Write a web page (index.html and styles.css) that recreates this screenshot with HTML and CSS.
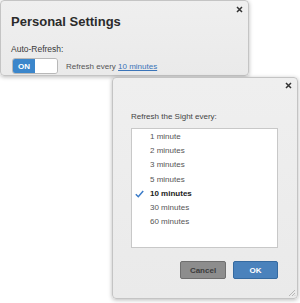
FILE: index.html
```html
<!DOCTYPE html>
<html>
<head>
<meta charset="utf-8">
<link rel="stylesheet" href="styles.css">
</head>
<body>
<div class="desk">
  <div class="dlg dlg-settings">
    <svg class="close" width="7" height="7" viewBox="0 0 7 7"><path d="M1 1 L6 6 M6 1 L1 6" stroke="#333" stroke-width="1.5"/></svg>
    <h1 class="title">Personal Settings</h1>
    <div class="label">Auto-Refresh:</div>
    <div class="row">
      <div class="toggle"><span class="on">ON</span><span class="off"></span></div>
      <span class="refresh">Refresh every <a class="link" href="#">10 minutes</a></span>
    </div>
  </div>

  <div class="dlg dlg-picker">
    <svg class="close" width="7" height="7" viewBox="0 0 7 7"><path d="M1 1 L6 6 M6 1 L1 6" stroke="#333" stroke-width="1.5"/></svg>
    <div class="prompt">Refresh the Sight every:</div>
    <ul class="list">
      <li class="item">1 minute</li>
      <li class="item">2 minutes</li>
      <li class="item">3 minutes</li>
      <li class="item">5 minutes</li>
      <li class="item sel"><svg class="check" width="9" height="8" viewBox="0 0 9 8"><path d="M0.8 4.2 L3.3 6.7 L8.2 0.9" fill="none" stroke="#3a7bc8" stroke-width="1.5"/></svg>10 minutes</li>
      <li class="item">30 minutes</li>
      <li class="item">60 minutes</li>
    </ul>
    <div class="actions">
      <button class="btn cancel">Cancel</button>
      <button class="btn ok">OK</button>
    </div>
    <svg class="grip" width="8" height="8" viewBox="0 0 8 8"><path d="M7 1 L1 7 M7 4 L4 7 M7 6.5 L6.5 7" stroke="#aaa" stroke-width="0.8"/></svg>
  </div>
</div>
</body>
</html>
```

FILE: styles.css
```css
* { box-sizing: border-box; }
html, body { margin: 0; padding: 0; background: #fff; }
body { font-family: "Liberation Sans", Arial, sans-serif; color: #444; }
.desk { position: relative; width: 300px; height: 303px; overflow: hidden; }

.dlg {
  position: absolute;
  background: linear-gradient(#efefef, #eaeaea);
  border: 1px solid #c4c4c4;
  border-radius: 4px;
  box-shadow: 0 1px 4px rgba(0,0,0,0.28);
}
.close { position: absolute; }

.dlg-settings { left: 0; top: 0; width: 249px; height: 76px; padding: 13px 0 0 10px; }
.dlg-settings .close { left: 235px; top: 5px; }
.title { margin: 0; font-size: 13px; line-height: 16px; font-weight: bold; color: #2b2b2b; }
.label { margin-top: 14px; font-size: 8.5px; line-height: 10px; color: #3a3a3a; }
.row { margin-top: 4px; display: flex; align-items: center; height: 16px; gap: 8px; }
.toggle {
  display: flex; width: 46px; height: 16px; margin-left: 1px;
  border: 1px solid #b8b8b8; border-radius: 3px; overflow: hidden;
}
.on {
  width: 22px; background: #3b86cb; color: #fff; font-size: 8px; font-weight: bold;
  display: flex; align-items: center; justify-content: center;
}
.off { flex: 1; background: #fff; }
.refresh { font-size: 8px; color: #555; }
.link { color: #3a74b8; text-decoration: underline; }

.dlg-picker { left: 112px; top: 77px; width: 186px; height: 222px; padding: 34px 19px 0 18px; display: flex; flex-direction: column; }
.dlg-picker .close { left: 172px; top: 4px; }
.prompt { font-size: 8px; line-height: 10px; color: #444; }
.list {
  margin: 6px 0 0; padding: 1px 0 0; list-style: none;
  height: 120px; background: #fff; border: 1px solid #c8c8c8;
}
.item { position: relative; font-size: 8px; line-height: 14.17px; padding-left: 18px; color: #555; }
.item.sel { font-weight: bold; color: #222; }
.check { position: absolute; left: 3px; top: 3px; }
.actions { margin-top: 13px; display: flex; justify-content: flex-end; gap: 7px; }
.btn {
  height: 18px; padding: 0; font-family: "Liberation Sans", Arial, sans-serif;
  font-size: 8px; font-weight: bold; border-radius: 2px; cursor: pointer;
}
.cancel { width: 46px; background: #8d8d8d; border: 1px solid #6f6f6f; color: #3c3c3c; }
.ok { width: 45px; background: #4a82bc; border: 1px solid #356aa0; color: #fff; }
.grip { position: absolute; right: 1px; bottom: 1px; }
```
